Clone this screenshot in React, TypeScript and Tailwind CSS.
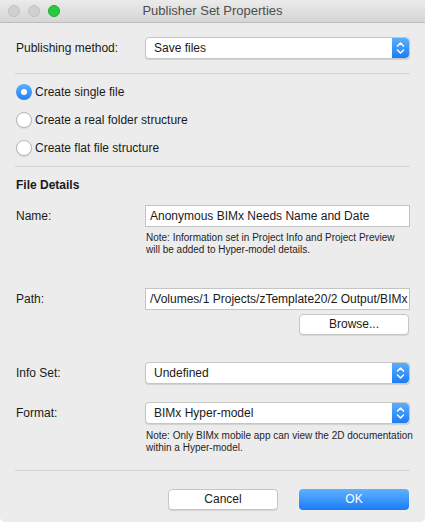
import { ReactNode } from 'react';

const font = { fontFamily: '"Liberation Sans", Arial, sans-serif' };

function Stepper() {
  return (
    <div className="w-[17px] h-full rounded-r-[4px] bg-gradient-to-b from-[#5aaefc] to-[#1a7cf5] flex items-center justify-center">
      <svg width="9" height="14" viewBox="0 0 9 14" fill="none" stroke="white" strokeWidth="1.5" strokeLinecap="round" strokeLinejoin="round">
        <path d="M1.5 5 L4.5 2 L7.5 5" />
        <path d="M1.5 9 L4.5 12 L7.5 9" />
      </svg>
    </div>
  );
}

function Select({ value }: { value: string }) {
  return (
    <div className="w-[265px] h-[22px] flex rounded-[4px] bg-white border border-[#c6c6c6] shadow-[0_1px_1px_rgba(0,0,0,0.12)] overflow-hidden">
      <div className="flex-1 pl-[8px] text-[12px] leading-[20px] text-[#1a1a1a]">{value}</div>
      <Stepper />
    </div>
  );
}

function Row({ label, children, className = '' }: { label: string; children: ReactNode; className?: string }) {
  return (
    <div className={`flex items-center ${className}`}>
      <div className="w-[130px] pl-[1px] text-[12px] text-[#1a1a1a]">{label}</div>
      {children}
    </div>
  );
}

function Radio({ checked, label }: { checked?: boolean; label: string }) {
  return (
    <div className="h-[28px] flex items-center gap-[3px] pl-[1px]">
      {checked ? (
        <div className="w-[16px] h-[16px] rounded-full bg-gradient-to-b from-[#5fb0fc] to-[#1c7ef5] flex items-center justify-center">
          <div className="w-[6px] h-[6px] rounded-full bg-white" />
        </div>
      ) : (
        <div className="w-[16px] h-[16px] rounded-full bg-white border border-[#b4b4b4] shadow-[0_1px_1px_rgba(0,0,0,0.08)]" />
      )}
      <span className="text-[12px] text-[#1a1a1a]">{label}</span>
    </div>
  );
}

function Input({ value }: { value: string }) {
  return (
    <div className="w-[265px] h-[22px] bg-white border border-[#c4c4c4] pl-[4px] text-[12px] leading-[20px] text-[#1a1a1a] whitespace-nowrap overflow-hidden">
      {value}
    </div>
  );
}

function Note({ children }: { children: ReactNode }) {
  return <div className="ml-[131px] text-[10px] leading-[12px] text-[#1f1f1f] whitespace-nowrap">{children}</div>;
}

function Button({ children, primary }: { children: ReactNode; primary?: boolean }) {
  return primary ? (
    <div className="w-[110px] h-[21px] rounded-[4px] bg-gradient-to-b from-[#5eb1fd] to-[#167cf6] text-white text-[12px] leading-[21px] text-center">
      {children}
    </div>
  ) : (
    <div className="w-[110px] h-[21px] rounded-[4px] bg-white border border-[#c6c6c6] shadow-[0_1px_1px_rgba(0,0,0,0.1)] text-[#1a1a1a] text-[12px] leading-[19px] text-center">
      {children}
    </div>
  );
}

function Divider({ className = '' }: { className?: string }) {
  return <div className={`h-px bg-[#d4d4d4] ${className}`} />;
}

export default function App() {
  return (
    <div style={font} className="w-[425px] h-[522px] bg-[#ececec] flex flex-col overflow-hidden rounded-b-[5px]">
      {/* title bar */}
      <div className="h-[23px] shrink-0 relative flex items-center justify-center bg-gradient-to-b from-[#ebebeb] to-[#d5d5d5] border-b border-[#bdbdbd]">
        <div className="absolute left-[8px] top-[5px] flex gap-[8px]">
          <div className="w-[12px] h-[12px] rounded-full bg-[#d0d0d0] border border-[#c2c2c2]" />
          <div className="w-[12px] h-[12px] rounded-full bg-[#d0d0d0] border border-[#c2c2c2]" />
          <div className="w-[12px] h-[12px] rounded-full bg-[#27c93f] border border-[#1eac2f]" />
        </div>
        <span className="text-[13px] text-[#4d4d4d]">Publisher Set Properties</span>
      </div>

      <div className="px-[15px] flex flex-col">
        <Row label="Publishing method:" className="mt-[14px]">
          <Select value="Save files" />
        </Row>
        <Divider className="mt-[14px]" />

        <div className="mt-[4px] flex flex-col">
          <Radio checked label="Create single file" />
          <Radio label="Create a real folder structure" />
          <Radio label="Create flat file structure" />
        </div>
        <Divider className="mt-[4px]" />

        <div className="mt-[10px] pl-[1px] text-[12px] font-bold text-[#1a1a1a] leading-[16px]">File Details</div>

        <Row label="Name:" className="mt-[12px]">
          <Input value="Anonymous BIMx Needs Name and Date" />
        </Row>
        <div className="mt-[5px]">
          <Note>
            Note: Information set in Project Info and Project Preview
            <br />
            will be added to Hyper-model details.
          </Note>
        </div>

        <Row label="Path:" className="mt-[32px]">
          <Input value="/Volumes/1 Projects/zTemplate20/2 Output/BIMx" />
        </Row>
        <div className="mt-[4px] flex justify-end pr-[1px]">
          <Button>Browse...</Button>
        </div>

        <Row label="Info Set:" className="mt-[27px]">
          <Select value="Undefined" />
        </Row>
        <Row label="Format:" className="mt-[18px]">
          <Select value="BIMx Hyper-model" />
        </Row>
        <div className="mt-[6px]">
          <Note>
            Note: Only BIMx mobile app can view the 2D documentation
            <br />
            within a Hyper-model.
          </Note>
        </div>

        <Divider className="mt-[16px]" />

        <div className="mt-[18px] flex justify-end gap-[21px] pr-[1px]">
          <Button>Cancel</Button>
          <Button primary>OK</Button>
        </div>
      </div>
    </div>
  );
}
